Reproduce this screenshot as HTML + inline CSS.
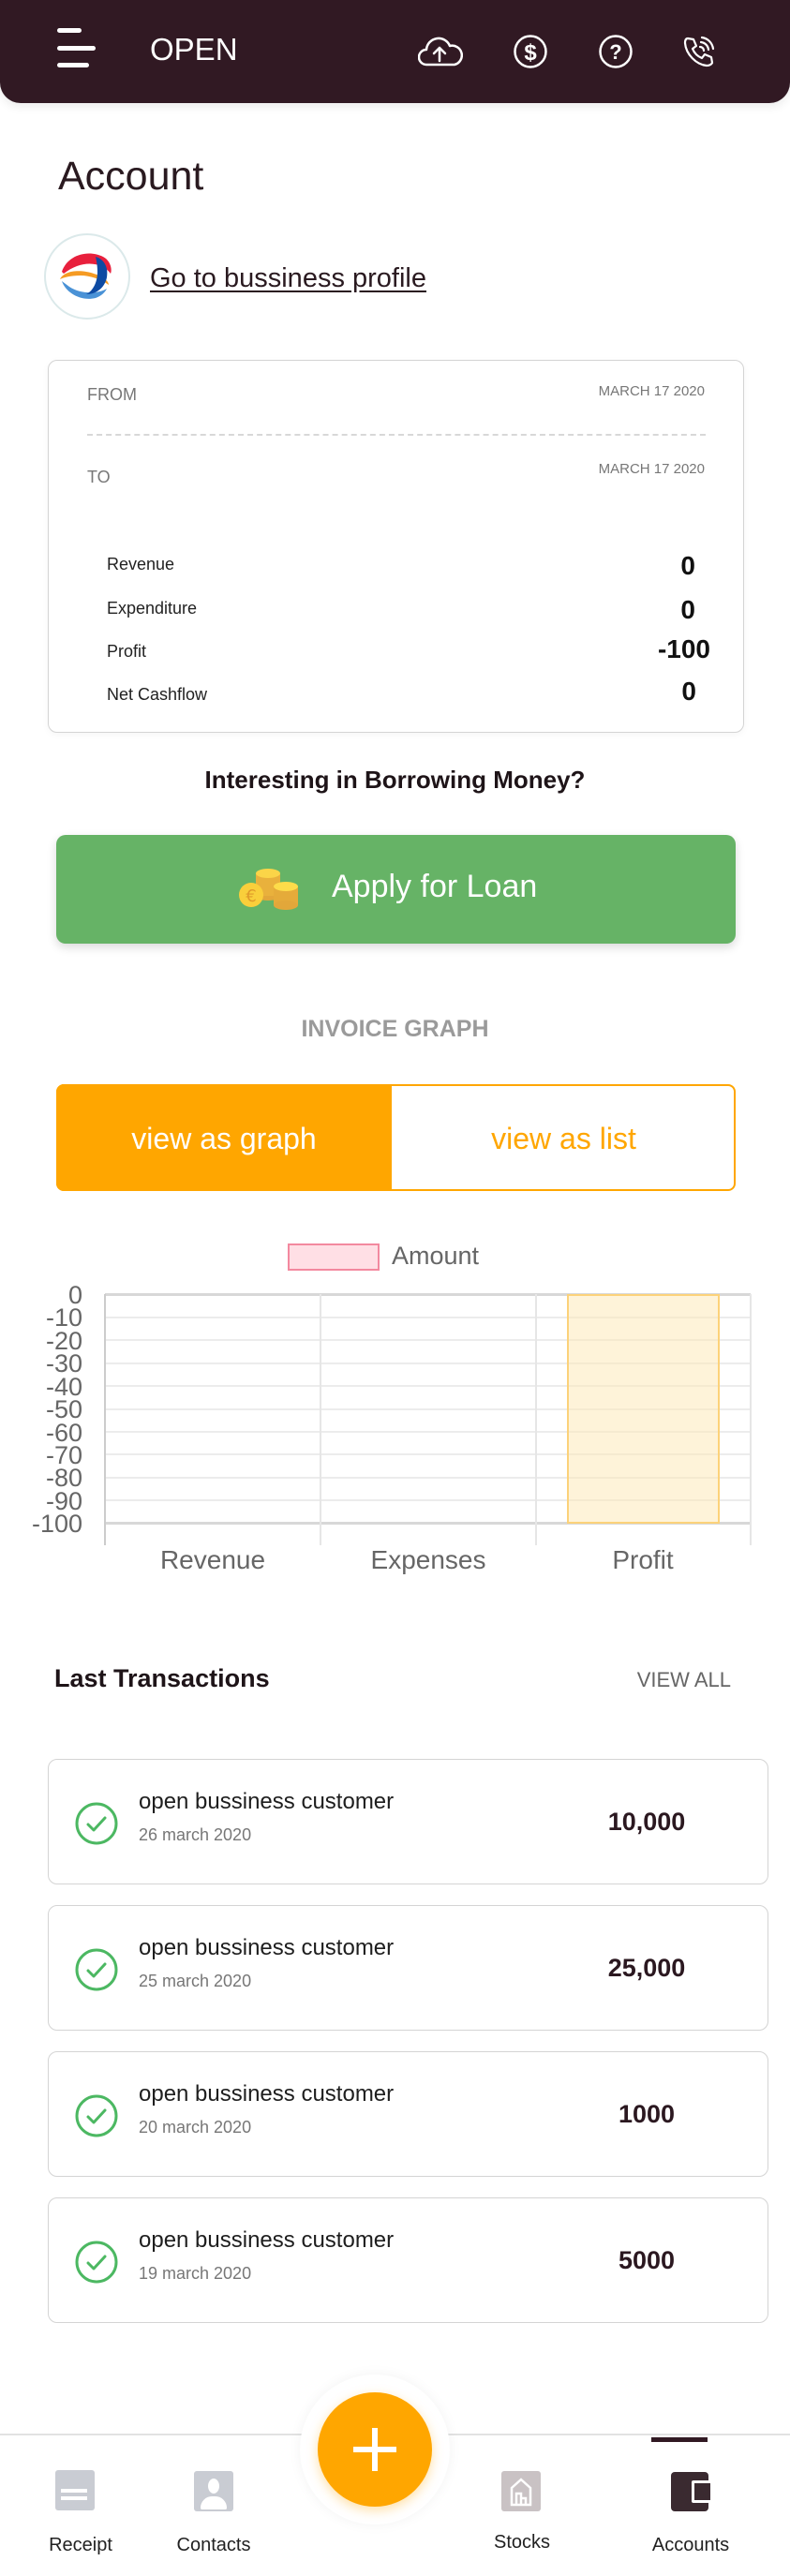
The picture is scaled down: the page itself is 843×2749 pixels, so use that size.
<!DOCTYPE html>
<html><head><meta charset="utf-8"><style>
*{margin:0;padding:0;box-sizing:border-box}
body{width:843px;height:2749px;position:relative;background:#fff;font-family:"Liberation Sans",sans-serif;overflow:hidden;color:#2a1a20}
.a{position:absolute}
.hdr{left:0;top:0;width:843px;height:110px;background:#311923;border-radius:0 0 22px 22px;box-shadow:0 4px 10px rgba(0,0,0,.08)}
.card{border:1.5px solid #d4d4d4;border-radius:10px;background:#fff}
.lbl{font-size:18px;color:#222}
.val{font-size:28px;font-weight:bold;color:#111;text-align:right;width:120px}
.yl{font-size:27px;color:#666;text-align:right;width:80px;left:8px;line-height:28px}
.gl{left:112px;width:689px;height:2px;background:#ececec}
.vl{width:2px;background:#e6e6e6;top:1381px;height:268px}
.xl{font-size:28px;color:#666;text-align:center;width:200px;top:1649px}
.tx{left:51px;width:769px;height:134px}
.tt{font-size:24px;color:#1e1e1e;left:96px;top:31px}
.td{font-size:18px;color:#777;left:96px;top:70px}
.ta{font-size:27px;font-weight:bold;color:#2b1820;width:200px;text-align:center;left:538px;top:51px}
.nl{font-size:20px;color:#222;text-align:center;width:140px;top:2705px}
</style></head><body>
<div class="a hdr"></div>
<div class="a" style="left:61px;top:30px;width:26px;height:5px;background:#fff;border-radius:3px"></div>
<div class="a" style="left:61px;top:49px;width:41px;height:5px;background:#fff;border-radius:3px"></div>
<div class="a" style="left:61px;top:67px;width:34px;height:5px;background:#fff;border-radius:3px"></div>
<div class="a" style="left:160px;top:34px;font-size:33px;color:#fff">OPEN</div>
<svg class="a" style="left:446px;top:34px" width="48" height="40" viewBox="0 0 48 40" fill="none" stroke="#fff" stroke-width="2.5" stroke-linecap="round" stroke-linejoin="round"><path d="M12 35H9a8 8 0 0 1 0-16 13 13 0 0 1 25-4 10 10 0 0 1 5 20H12z"/><path d="M23 31V17M17 23l6-6 6 6"/></svg>
<svg class="a" style="left:547px;top:36px" width="38" height="38" viewBox="0 0 38 38" fill="none" stroke="#fff" stroke-width="2.5"><circle cx="19" cy="19" r="16.5"/><text x="19" y="28" font-size="24" font-family="Liberation Sans" fill="#fff" stroke="none" text-anchor="middle" font-weight="bold">$</text></svg>
<svg class="a" style="left:638px;top:36px" width="38" height="38" viewBox="0 0 38 38" fill="none" stroke="#fff" stroke-width="2.5"><circle cx="19" cy="19" r="16.5"/><text x="19" y="27" font-size="22" font-family="Liberation Sans" fill="#fff" stroke="none" text-anchor="middle" font-weight="bold">?</text></svg>
<svg class="a" style="left:728px;top:37px" width="36" height="36" viewBox="0 0 36 36" fill="none" stroke="#fff" stroke-width="2.2" stroke-linecap="round" stroke-linejoin="round"><path d="M6 4l6 1 3 7-4 3a18 18 0 0 0 10 10l3-4 7 3 1 6c-1 2-3 3-6 3C15 32 4 21 3 9c0-3 1-5 3-5z"/><path d="M20 8a9 9 0 0 1 8 8M21 3a14 14 0 0 1 12 12M19 13a4 4 0 0 1 4 4"/></svg>

<div class="a" style="left:62px;top:164px;font-size:43px;color:#2a1a20">Account</div>
<div class="a" style="left:47px;top:249px;width:92px;height:92px;border-radius:50%;border:2px solid #dbe9ea;background:#fff"></div>
<svg class="a" style="left:58px;top:260px" width="70" height="70" viewBox="0 0 70 70"><path d="M8 30C14 12 36 6 52 14c8 4 10 14 8 18C52 20 30 16 10 32z" fill="#e8203d"/><path d="M6 38c4-8 16-10 28-8s24 8 24 14c-8-6-20-10-30-10S10 36 6 38z" fill="#f59b23"/><path d="M8 40c4 12 20 22 36 18 6-2 10-6 12-10-10 6-28 6-40-2z" fill="#4a92d6"/><path d="M44 14c8 2 14 10 12 22-2 10-10 18-22 18 8-4 12-14 12-24 0-6-1-12-2-16z" fill="#0d4aa3"/></svg>
<div class="a" style="left:160px;top:281px;font-size:29px;color:#2a1a20;text-decoration:underline;text-underline-offset:4px">Go to bussiness profile</div>

<div class="a card" style="left:51px;top:384px;width:743px;height:398px;box-shadow:0 2px 8px rgba(0,0,0,.04)"></div>
<div class="a" style="left:93px;top:411px;font-size:18px;color:#777">FROM</div>
<div class="a" style="left:552px;width:200px;text-align:right;top:409px;font-size:15px;color:#777">MARCH 17 2020</div>
<div class="a" style="left:93px;top:463px;width:660px;border-top:2px dashed #d8d8d8"></div>
<div class="a" style="left:93px;top:499px;font-size:18px;color:#777">TO</div>
<div class="a" style="left:552px;width:200px;text-align:right;top:492px;font-size:15px;color:#777">MARCH 17 2020</div>
<div class="a lbl" style="left:114px;top:592px">Revenue</div>
<div class="a lbl" style="left:114px;top:639px">Expenditure</div>
<div class="a lbl" style="left:114px;top:685px">Profit</div>
<div class="a lbl" style="left:114px;top:731px">Net Cashflow</div>
<div class="a val" style="left:622px;top:588px">0</div>
<div class="a val" style="left:622px;top:635px">0</div>
<div class="a val" style="left:638px;top:677px;width:120px">-100</div>
<div class="a val" style="left:623px;top:722px">0</div>

<div class="a" style="left:0;width:843px;text-align:center;top:817px;font-size:26px;font-weight:bold;color:#1e1418">Interesting in Borrowing Money?</div>
<div class="a" style="left:60px;top:891px;width:725px;height:116px;background:#66b366;border-radius:10px;box-shadow:0 4px 10px rgba(0,0,0,.15)"></div>
<svg class="a" style="left:254px;top:926px" width="66" height="46" viewBox="0 0 66 46"><ellipse cx="32" cy="30" rx="13" ry="5" fill="#e2a73a"/><rect x="19" y="6" width="26" height="24" fill="#e9b13c"/><ellipse cx="32" cy="6" rx="13" ry="5" fill="#fbd548"/><rect x="38" y="20" width="26" height="20" fill="#e5ab3a"/><ellipse cx="51" cy="40" rx="13" ry="5" fill="#e2a73a"/><ellipse cx="51" cy="20" rx="13" ry="5" fill="#fddc4a"/><circle cx="14" cy="29" r="13" fill="#f9cf3b"/><text x="14" y="36" font-size="18" text-anchor="middle" fill="#e09a2a" font-family="DejaVu Sans">€</text></svg>
<div class="a" style="left:354px;top:927px;font-size:34px;color:#fff">Apply for Loan</div>

<div class="a" style="left:0;width:843px;text-align:center;top:1084px;font-size:25px;font-weight:bold;color:#9a9a9a">INVOICE GRAPH</div>
<div class="a" style="left:60px;top:1157px;width:725px;height:114px;border:2px solid #ffa600;border-radius:8px"></div>
<div class="a" style="left:60px;top:1157px;width:358px;height:114px;background:#ffa600;border-radius:8px 0 0 8px"></div>
<div class="a" style="left:60px;width:358px;text-align:center;top:1197px;font-size:32px;color:#fff">view as graph</div>
<div class="a" style="left:418px;width:367px;text-align:center;top:1197px;font-size:32px;color:#ffa600">view as list</div>

<div class="a" style="left:307px;top:1327px;width:98px;height:29px;background:#ffdfe5;border:2px solid #f3899f"></div>
<div class="a" style="left:418px;top:1325px;font-size:27px;color:#666">Amount</div>
<div class="a gl" style="top:1380px;background:#d8d8d8;height:3px"></div>
<div class="a gl" style="top:1405px"></div><div class="a gl" style="top:1429px"></div><div class="a gl" style="top:1454px"></div><div class="a gl" style="top:1478px"></div><div class="a gl" style="top:1503px"></div><div class="a gl" style="top:1527px"></div><div class="a gl" style="top:1551px"></div><div class="a gl" style="top:1576px"></div><div class="a gl" style="top:1600px"></div>
<div class="a gl" style="top:1624px;background:#d8d8d8;height:3px"></div>
<div class="a vl" style="left:111px;background:#ccc"></div><div class="a vl" style="left:341px"></div><div class="a vl" style="left:571px"></div><div class="a vl" style="left:800px"></div>
<div class="a" style="left:605px;top:1381px;width:163px;height:245px;background:rgba(253,232,180,.5);border:2px solid #fcd27a"></div>
<div class="a yl" style="top:1368px">0</div><div class="a yl" style="top:1392px">-10</div><div class="a yl" style="top:1417px">-20</div><div class="a yl" style="top:1441px">-30</div><div class="a yl" style="top:1466px">-40</div><div class="a yl" style="top:1490px">-50</div><div class="a yl" style="top:1515px">-60</div><div class="a yl" style="top:1539px">-70</div><div class="a yl" style="top:1563px">-80</div><div class="a yl" style="top:1588px">-90</div><div class="a yl" style="top:1612px">-100</div>
<div class="a xl" style="left:127px">Revenue</div><div class="a xl" style="left:357px">Expenses</div><div class="a xl" style="left:586px">Profit</div>

<div class="a" style="left:58px;top:1776px;font-size:27px;font-weight:bold;color:#1e1418">Last Transactions</div>
<div class="a" style="left:640px;width:140px;text-align:right;top:1780px;font-size:22px;color:#666">VIEW ALL</div>

<div class="a card tx" style="top:1877px">
<svg class="a" style="left:28px;top:45px" width="46" height="46" viewBox="0 0 46 46" fill="none" stroke="#4cb862" stroke-width="3" stroke-linecap="round" stroke-linejoin="round"><circle cx="23" cy="23" r="21"/><path d="M14 24l6 6 12-13"/></svg>
<div class="a tt">open bussiness customer</div><div class="a td">26 march 2020</div><div class="a ta">10,000</div></div>
<div class="a card tx" style="top:2033px">
<svg class="a" style="left:28px;top:45px" width="46" height="46" viewBox="0 0 46 46" fill="none" stroke="#4cb862" stroke-width="3" stroke-linecap="round" stroke-linejoin="round"><circle cx="23" cy="23" r="21"/><path d="M14 24l6 6 12-13"/></svg>
<div class="a tt">open bussiness customer</div><div class="a td">25 march 2020</div><div class="a ta">25,000</div></div>
<div class="a card tx" style="top:2189px">
<svg class="a" style="left:28px;top:45px" width="46" height="46" viewBox="0 0 46 46" fill="none" stroke="#4cb862" stroke-width="3" stroke-linecap="round" stroke-linejoin="round"><circle cx="23" cy="23" r="21"/><path d="M14 24l6 6 12-13"/></svg>
<div class="a tt">open bussiness customer</div><div class="a td">20 march 2020</div><div class="a ta">1000</div></div>
<div class="a card tx" style="top:2345px">
<svg class="a" style="left:28px;top:45px" width="46" height="46" viewBox="0 0 46 46" fill="none" stroke="#4cb862" stroke-width="3" stroke-linecap="round" stroke-linejoin="round"><circle cx="23" cy="23" r="21"/><path d="M14 24l6 6 12-13"/></svg>
<div class="a tt">open bussiness customer</div><div class="a td">19 march 2020</div><div class="a ta">5000</div></div>

<div class="a" style="left:0;top:2597px;width:843px;height:152px;border-top:2px solid #e2e2e2;background:#fff"></div>
<div class="a" style="left:320px;top:2534px;width:160px;height:160px;border-radius:50%;background:#fff;box-shadow:0 0 14px rgba(0,0,0,.05)"></div>
<div class="a" style="left:339px;top:2553px;width:122px;height:122px;border-radius:50%;background:#ffa600;box-shadow:0 4px 12px rgba(255,166,0,.35)"></div>
<div class="a" style="left:377px;top:2611px;width:46px;height:6px;background:#fff"></div>
<div class="a" style="left:397px;top:2591px;width:6px;height:46px;background:#fff"></div>
<div class="a" style="left:59px;top:2636px;width:42px;height:43px;background:#c9ccd3;border-radius:3px"></div>
<div class="a" style="left:65px;top:2656px;width:28px;height:4px;background:#fff"></div>
<div class="a" style="left:65px;top:2664px;width:28px;height:4px;background:#fff"></div>
<div class="a" style="left:207px;top:2637px;width:42px;height:43px;background:#c9ccd3;border-radius:3px;overflow:hidden"><div class="a" style="left:15px;top:8px;width:12px;height:16px;border-radius:50%;background:#fff"></div><div class="a" style="left:7px;top:27px;width:28px;height:14px;border-radius:14px 14px 2px 2px;background:#fff"></div></div>
<div class="a" style="left:535px;top:2637px;width:42px;height:43px;background:#c9c2c4;border-radius:3px"></div>
<svg class="a" style="left:543px;top:2643px" width="26" height="32" viewBox="0 0 26 32" fill="none" stroke="#fff" stroke-width="2.5"><path d="M3 30V12l10-9 10 9v18z"/><path d="M8 30V18h5v12M13 23h5v7"/></svg>
<div class="a" style="left:695px;top:2601px;width:60px;height:5px;background:#311923"></div>
<div class="a" style="left:716px;top:2638px;width:40px;height:42px;background:#3a2a30;border-radius:4px"></div>
<div class="a" style="left:738px;top:2647px;width:19px;height:24px;background:#fff;border-radius:2px 0 0 2px"></div>
<div class="a" style="left:741px;top:2650px;width:17px;height:18px;background:#3a2a30"></div>
<div class="a nl" style="left:16px">Receipt</div>
<div class="a nl" style="left:158px">Contacts</div>
<div class="a nl" style="left:487px;top:2702px">Stocks</div>
<div class="a nl" style="left:667px">Accounts</div>
</body></html>
